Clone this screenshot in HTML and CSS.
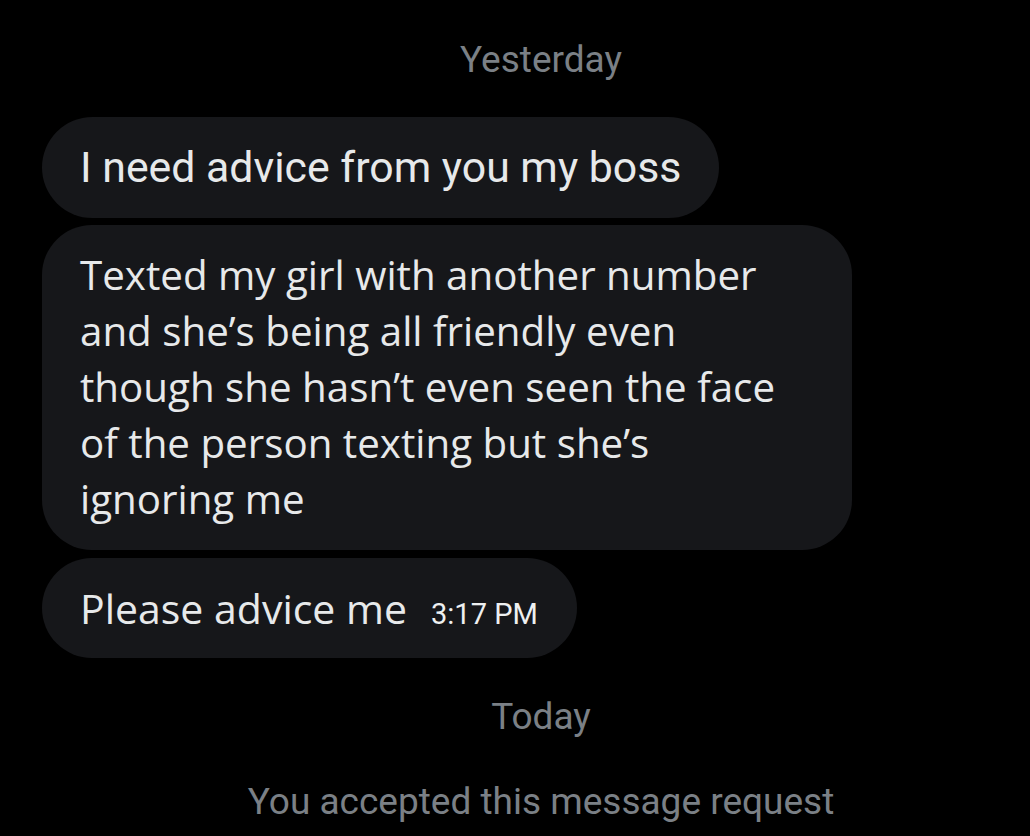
FILE: index.html
```html
<!DOCTYPE html>
<html lang="en">
<head>
<meta charset="utf-8">
<title>Messages</title>
<link rel="stylesheet" href="styles.css">
</head>
<body>
<main class="chat">
  <div class="day day-yesterday">Yesterday</div>
  <div class="thread">
    <div class="bubble bubble-one">I need advice from you my boss</div>
    <div class="bubble bubble-two">Texted my girl with another number<br>and she’s being all friendly even<br>though she hasn’t even seen the face<br>of the person texting but she’s<br>ignoring me</div>
    <div class="bubble bubble-three"><span class="msg">Please advice me</span><span class="time">3:17 PM</span></div>
  </div>
  <div class="day day-today">Today</div>
  <div class="day notice">You accepted this message request</div>
</main>
</body>
</html>
```

FILE: styles.css
```css
html, body {
  margin: 0;
  padding: 0;
  background: #000;
}
body {
  width: 1030px;
  height: 836px;
  overflow: hidden;
}
.chat {
  display: flex;
  flex-direction: column;
}
.day {
  font-family: Roboto, "Liberation Sans", sans-serif;
  font-size: 37px;
  line-height: 44px;
  color: #7b8086;
  text-align: center;
  padding-left: 52px;
}
.day-yesterday {
  margin-top: 38px;
}
.thread {
  display: flex;
  flex-direction: column;
  align-items: flex-start;
  padding-left: 42px;
  margin-top: 35px;
}
.bubble {
  background: #16171a;
  color: #e7e9ea;
  box-sizing: border-box;
}
.bubble-one {
  font-family: Roboto, "Liberation Sans", sans-serif;
  font-size: 42.8px;
  line-height: 101px;
  height: 101px;
  padding: 0 38px;
  border-radius: 51px;
}
.bubble-two {
  font-family: "Open Sans", "Noto Sans", sans-serif;
  font-size: 40.3px;
  line-height: 56px;
  width: 810px;
  padding: 22px 38px 23px;
  border-radius: 50px;
  margin-top: 7px;
}
.bubble-three {
  display: flex;
  align-items: baseline;
  gap: 24px;
  height: 100px;
  padding: 0 39px 0 38px;
  line-height: 100px;
  border-radius: 50px;
  margin-top: 8px;
}
.bubble-three .msg {
  font-family: "Open Sans", "Noto Sans", sans-serif;
  font-size: 41px;
}
.bubble-three .time {
  font-family: Roboto, "Liberation Sans", sans-serif;
  font-size: 29px;
  color: #eef0f1;
}
.day-today {
  margin-top: 37px;
}
.notice {
  margin-top: 41px;
}
```
